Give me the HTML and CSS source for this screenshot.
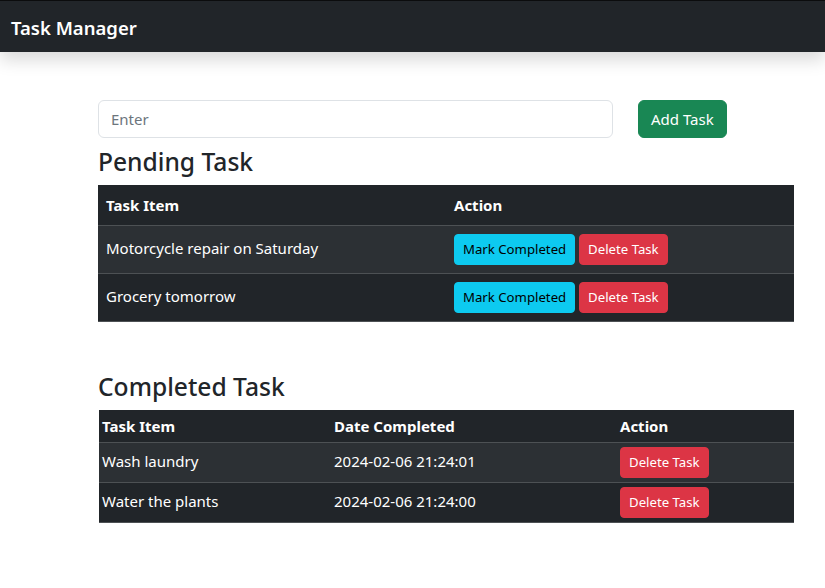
FILE: index.html
```html
<!DOCTYPE html>
<html lang="en">
<head>
<meta charset="utf-8">
<title>Task Manager</title>
<link rel="stylesheet" href="styles.css">
</head>
<body>
<nav class="navbar">
  <span class="brand">Task Manager</span>
</nav>
<main class="content">
  <form class="add-form">
    <input class="task-input" type="text" placeholder="Enter">
    <button type="button" class="btn btn-success">Add Task</button>
  </form>
  <h3 class="section-title">Pending Task</h3>
  <table class="tbl tbl-pending">
    <thead>
      <tr><th class="col-half">Task Item</th><th class="col-half">Action</th></tr>
    </thead>
    <tbody>
      <tr class="striped">
        <td>Motorcycle repair on Saturday</td>
        <td><button class="btn btn-sm btn-info">Mark Completed</button> <button class="btn btn-sm btn-danger">Delete Task</button></td>
      </tr>
      <tr>
        <td>Grocery tomorrow</td>
        <td><button class="btn btn-sm btn-info">Mark Completed</button> <button class="btn btn-sm btn-danger">Delete Task</button></td>
      </tr>
    </tbody>
  </table>
  <h3 class="section-title completed-title">Completed Task</h3>
  <table class="tbl tbl-sm tbl-completed">
    <thead>
      <tr><th class="col-item">Task Item</th><th class="col-date">Date Completed</th><th>Action</th></tr>
    </thead>
    <tbody>
      <tr class="striped">
        <td>Wash laundry</td>
        <td>2024-02-06 21:24:01</td>
        <td><button class="btn btn-sm btn-danger">Delete Task</button></td>
      </tr>
      <tr>
        <td>Water the plants</td>
        <td>2024-02-06 21:24:00</td>
        <td><button class="btn btn-sm btn-danger">Delete Task</button></td>
      </tr>
    </tbody>
  </table>
</main>
</body>
</html>
```
FILE: styles.css
```css
* { box-sizing: border-box; }
html, body { margin: 0; padding: 0; }
body {
  font-family: "Noto Sans", "Open Sans", sans-serif;
  font-size: 15px;
  line-height: 24px;
  color: #212529;
  background: #fff;
}
.navbar {
  height: 52px;
  background: #212529;
  border-top: 1px solid #0b0c0d;
  display: flex;
  align-items: center;
  padding: 0 11px;
  box-shadow: 0 8px 16px rgba(0,0,0,0.15);
}
.brand {
  color: #fff;
  font-size: 18.5px;
  font-weight: 600;
  line-height: 30px;
  margin-top: 2px;
}
.content {
  padding: 48px 0 0 98px;
  width: 794px;
}
.add-form {
  display: flex;
  gap: 25px;
  margin: 0;
}
.task-input {
  width: 515px;
  height: 38px;
  padding: 6px 12px;
  font: inherit;
  font-size: 15px;
  color: #212529;
  border: 1px solid #dee2e6;
  border-radius: 6px;
  outline: none;
}
.task-input::placeholder { color: #6c757d; }
.btn {
  display: inline-block;
  font-family: inherit;
  font-size: 15px;
  line-height: 24px;
  padding: 6px 12px;
  border: 1px solid transparent;
  border-radius: 6px;
  cursor: pointer;
  vertical-align: baseline;
}
.btn-sm {
  font-size: 13.2px;
  line-height: 21px;
  padding: 4px 8px;
  border-radius: 4px;
}
.btn-success { background: #198754; border-color: #198754; color: #fff; }
.btn-info { background: #0dcaf0; border-color: #0dcaf0; color: #000; }
.btn-danger { background: #dc3545; border-color: #dc3545; color: #fff; }
.section-title {
  font-size: 24.6px;
  font-weight: 500;
  line-height: 31px;
  margin: 8px 0 8px;
}
.completed-title { margin-top: 49px; }
.tbl {
  width: 696px;
  border-collapse: collapse;
  background: #212529;
  color: #fff;
}
.tbl th {
  text-align: left;
  font-weight: 700;
  padding: 8px;
  border-bottom: 1px solid #4d5154;
  vertical-align: bottom;
}
.tbl td {
  padding: 8px;
  border-bottom: 1px solid #4d5154;
  vertical-align: baseline;
}
.tbl tr.striped td { background: #2c3034; }
.col-half { width: 50%; }
.tbl-sm th, .tbl-sm td { padding: 4px 3px; }
.tbl-completed { width: 695px; margin-left: 1px; }
.col-item { width: 232px; }
.col-date { width: 286px; }
```
